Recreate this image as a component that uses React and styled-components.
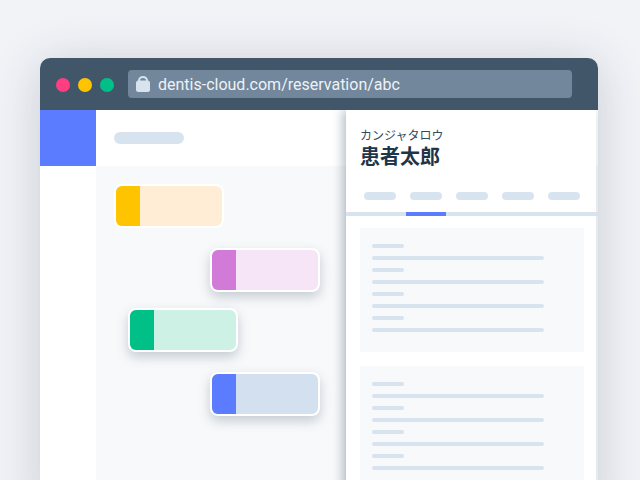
import styled, { createGlobalStyle } from "styled-components";

const Global = createGlobalStyle`
html,body{
    margin:0;
    padding:0;
}
body{
    background:#f1f3f7;
    font-family:Roboto,"Noto Sans CJK JP",sans-serif;
}
`;

const Page = styled.div`
width:640px;
height:480px;
overflow:hidden;
padding:58px 42px 0 40px;
box-sizing:border-box;
`;

const Frame = styled.div`
border-radius:10px 10px 0 0;
box-shadow:0 6px 50px rgba(40,50,70,.2);
`;

const Browser = styled.div`
height:460px;
border-radius:10px 10px 0 0;
overflow:hidden;
display:flex;
flex-direction:column;
background:#fff;
`;

const TitleBar = styled.div`
height:52px;
flex:none;
background:#415769;
display:flex;
align-items:center;
padding:0 26px 0 16px;
position:relative;
z-index:2;
`;

const Dots = styled.div`
display:flex;
gap:8px;
margin:2px 14px 0 0;
`;

const Dot = styled.span`
width:14px;
height:14px;
border-radius:50%;
background:${p => p.$color};
`;

const UrlBar = styled.div`
flex:1;
height:28px;
border-radius:4px;
background:#72879b;
display:flex;
align-items:center;
gap:8px;
padding:0 8px;
color:#eef2f6;
font-size:16px;
`;

const Body = styled.div`
flex:1;
display:flex;
position:relative;
min-height:0;
`;

const Sidebar = styled.div`
width:56px;
flex:none;
background:#fff;
`;

const Logo = styled.div`
height:56px;
background:#5b7cff;
`;

const Main = styled.div`
flex:1;
display:flex;
flex-direction:column;
`;

const Header = styled.div`
height:56px;
flex:none;
background:#fff;
display:flex;
align-items:center;
padding-left:18px;
`;

const Pill = styled.div`
width:${p => p.$w}px;
height:${p => p.$h}px;
border-radius:${p => p.$h / 2}px;
background:#d7e4f0;
`;

const Schedule = styled.div`
flex:1;
background:#f8f9fb;
padding:18px;
`;

const Event = styled.div`
width:106px;
height:40px;
margin-left:${p => p.$left}px;
margin-top:${p => p.$top}px;
display:flex;
overflow:hidden;
border-radius:8px;
border:2px solid #fff;
background:${p => p.$tint};
box-shadow:${p => p.$flat ? "none" : "0 5px 12px rgba(65,87,105,.28)"};
`;

const EventTag = styled.div`
width:24px;
background:${p => p.$color};
`;

const Panel = styled.div`
position:absolute;
top:0;
bottom:0;
left:306px;
width:250px;
background:#fff;
box-shadow:-3px 0 10px rgba(65,87,105,.4);
display:flex;
flex-direction:column;
`;

const Patient = styled.div`
padding:17px 14px 0;
height:66px;
box-sizing:border-box;
`;

const Kana = styled.div`
font-family:"Noto Sans CJK JP",sans-serif;
font-size:12px;
line-height:16px;
color:#33495c;
`;

const Name = styled.div`
font-family:"Noto Sans CJK JP",sans-serif;
font-size:20px;
font-weight:700;
line-height:26px;
color:#1f3549;
`;

const Tabs = styled.div`
display:flex;
gap:6px;
height:40px;
width:252px;
flex:none;
box-sizing:border-box;
padding-left:14px;
border-bottom:4px solid #d7e4f0;
`;

const Tab = styled.div`
width:40px;
height:36px;
flex:none;
display:flex;
justify-content:center;
padding-top:16px;
box-sizing:border-box;
position:relative;
${p => p.$active && `
&::after{
    content:"";
    position:absolute;
    left:0;
    right:0;
    bottom:-4px;
    height:4px;
    background:#5b7cff;
}
`}
`;

const Cards = styled.div`
padding:12px 12px 0 14px;
display:flex;
flex-direction:column;
gap:14px;
`;

const Card = styled.div`
flex:none;
height:124px;
background:#f8f9fb;
padding:16px 12px;
box-sizing:border-box;
display:flex;
flex-direction:column;
gap:8px;
`;

const Line = styled.div`
flex:none;
width:${p => p.$w}px;
height:4px;
border-radius:2px;
background:#d7e4f0;
`;

function LockIcon() {
    return (
        <svg width="14" height="16" viewBox="0 0 14 16">
            <path d="M3 6V4.6A4 3.6 0 0 1 11 4.6V6" fill="none" stroke="#d8e3ee" strokeWidth="2" />
            <rect x="0" y="4.5" width="14" height="11.5" rx="2.5" fill="#d8e3ee" />
        </svg>
    );
}

const events = [
    { left: 0, top: 0, color: "#ffc400", tint: "#ffeed5", flat: true },
    { left: 96, top: 20, color: "#d17ad8", tint: "#f6e4f7" },
    { left: 14, top: 16, color: "#00c088", tint: "#cdf2e5" },
    { left: 96, top: 20, color: "#5b7cff", tint: "#d3e0f0" },
];

const lines = [32, 172, 32, 172, 32, 172, 32, 172];

export default function App() {
    return (
        <Page>
            <Global />
            <Frame>
                <Browser>
                    <TitleBar>
                        <Dots>
                            <Dot $color="#ff3d81" />
                            <Dot $color="#ffc400" />
                            <Dot $color="#00c088" />
                        </Dots>
                        <UrlBar>
                            <LockIcon />
                            dentis-cloud.com/reservation/abc
                        </UrlBar>
                    </TitleBar>
                    <Body>
                        <Sidebar>
                            <Logo />
                        </Sidebar>
                        <Main>
                            <Header>
                                <Pill $w={70} $h={12} />
                            </Header>
                            <Schedule>
                                {events.map((e, i) => (
                                    <Event key={i} $left={e.left} $top={e.top} $tint={e.tint} $flat={e.flat}>
                                        <EventTag $color={e.color} />
                                    </Event>
                                ))}
                            </Schedule>
                        </Main>
                        <Panel>
                            <Patient>
                                <Kana>カンジャタロウ</Kana>
                                <Name>患者太郎</Name>
                            </Patient>
                            <Tabs>
                                {[0, 1, 2, 3, 4].map(i => (
                                    <Tab key={i} $active={i === 1}>
                                        <Pill $w={32} $h={8} />
                                    </Tab>
                                ))}
                            </Tabs>
                            <Cards>
                                {[0, 1].map(c => (
                                    <Card key={c}>
                                        {lines.map((w, i) => <Line key={i} $w={w} />)}
                                    </Card>
                                ))}
                            </Cards>
                        </Panel>
                    </Body>
                </Browser>
            </Frame>
        </Page>
    );
}
